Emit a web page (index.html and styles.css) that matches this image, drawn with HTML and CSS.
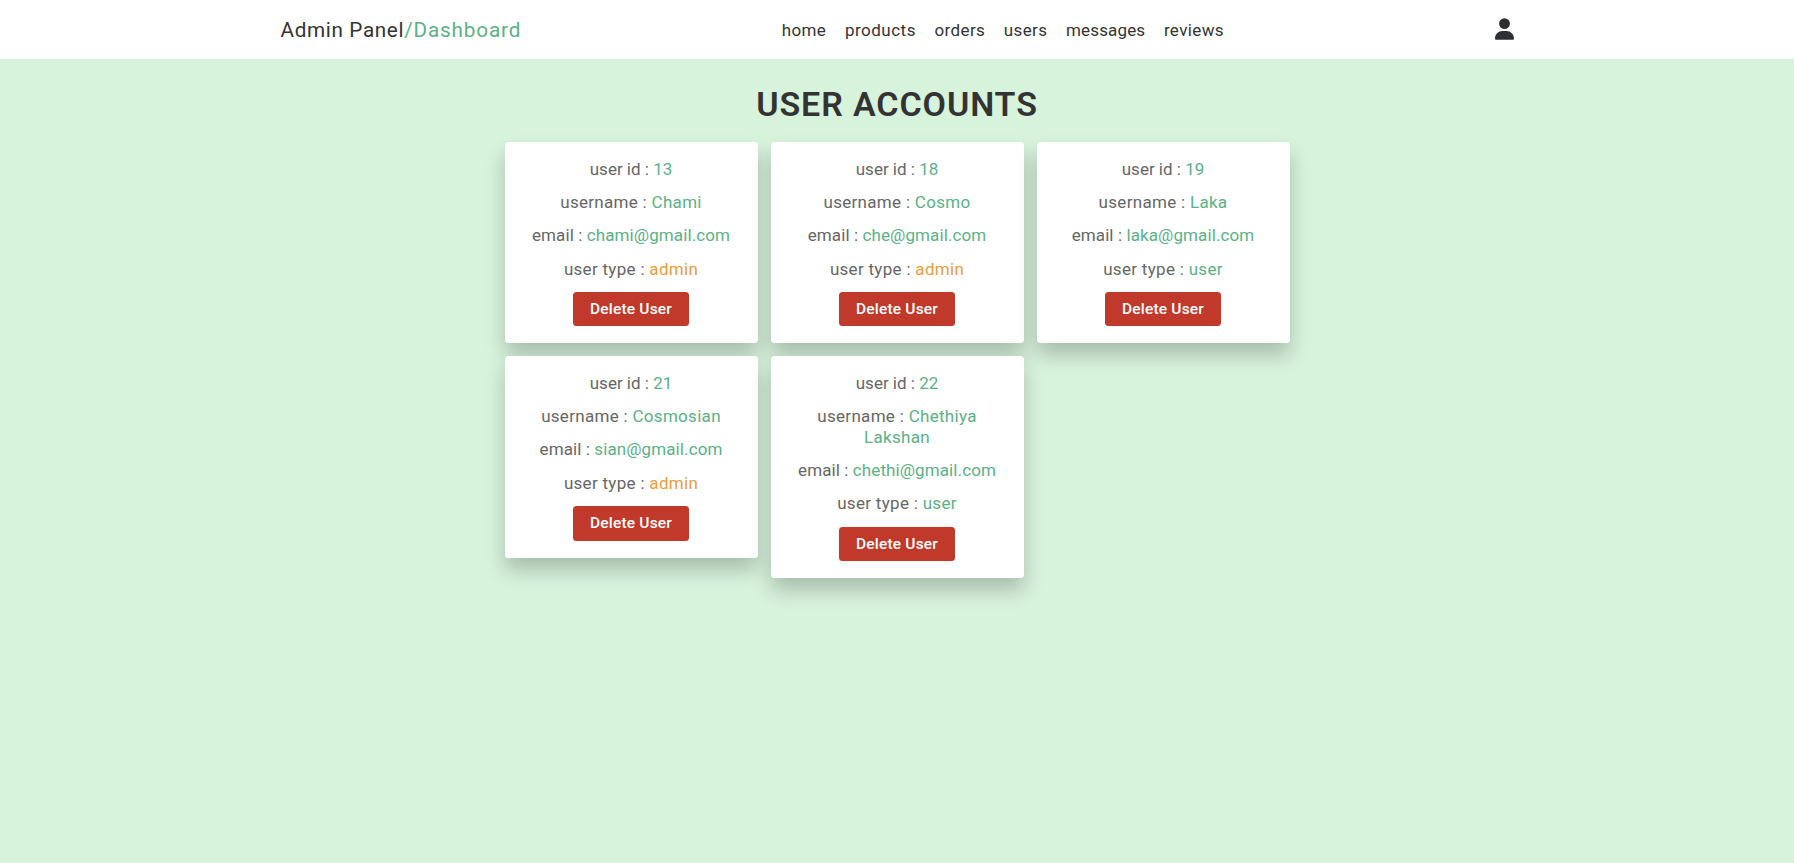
FILE: index.html
```
<!DOCTYPE html>
<html lang="en">
<head>
<meta charset="utf-8">
<title>User Accounts</title>
<link rel="stylesheet" href="styles.css">
</head>
<body>
<header class="header">
  <div class="bar">
    <a class="logo">Admin Panel<span>/Dashboard</span></a>
    <nav class="nav"><a>home</a><a class="wide">products</a><a>orders</a><a>users</a><a class="tight">messages</a><a>reviews</a></nav>
    <svg class="user-icon" viewBox="0 0 448 512"><path d="M224 256a128 128 0 1 0 0-256 128 128 0 1 0 0 256zm-45.700 48C79.800 304 0 383.800 0 482.300 0 498.700 13.300 512 29.700 512h388.600c16.400 0 29.700-13.300 29.700-29.700C448 383.800 368.200 304 269.700 304z"/></svg>
  </div>
</header>
<main class="accounts">
  <h1 class="heading">USER ACCOUNTS</h1>
  <div class="grid">
    <section class="card">
      <p class="id">user id : <span>13</span></p>
      <p class="name">username : <span>Chami</span></p>
      <p class="email">email : <span>chami@gmail.com</span></p>
      <p class="type">user type : <span class="admin">admin</span></p>
      <a class="delete">Delete User</a>
    </section>
    <section class="card">
      <p class="id">user id : <span>18</span></p>
      <p class="name">username : <span>Cosmo</span></p>
      <p class="email">email : <span>che@gmail.com</span></p>
      <p class="type">user type : <span class="admin">admin</span></p>
      <a class="delete">Delete User</a>
    </section>
    <section class="card">
      <p class="id">user id : <span>19</span></p>
      <p class="name">username : <span>Laka</span></p>
      <p class="email">email : <span>laka@gmail.com</span></p>
      <p class="type">user type : <span>user</span></p>
      <a class="delete">Delete User</a>
    </section>
    <section class="card">
      <p class="id">user id : <span>21</span></p>
      <p class="name">username : <span>Cosmosian</span></p>
      <p class="email">email : <span>sian@gmail.com</span></p>
      <p class="type">user type : <span class="admin">admin</span></p>
      <a class="delete">Delete User</a>
    </section>
    <section class="card">
      <p class="id">user id : <span>22</span></p>
      <p class="name">username : <span>Chethiya<br>Lakshan</span></p>
      <p class="email">email : <span>chethi@gmail.com</span></p>
      <p class="type">user type : <span>user</span></p>
      <a class="delete">Delete User</a>
    </section>
  </div>
</main>
</body>
</html>
```
FILE: styles.css
```
* { box-sizing: border-box; margin: 0; padding: 0; }
body {
  min-height: 863px;
  background: #d7f3dc;
  font-family: Roboto, "Liberation Sans", sans-serif;
  color: #333;
}
.header { height: 59px; background: #fff; }
.bar {
  display: flex;
  align-items: center;
  justify-content: space-between;
  width: 1233px;
  height: 59px;
  margin: 0 auto;
}
.logo { font-size: 20.7px; line-height: 24px; letter-spacing: 0.65px; }
.logo span { color: #5bb186; letter-spacing: 0.85px; }
.nav { display: flex; gap: 18.600px; margin-right: 11px; font-size: 17px; line-height: 20px; letter-spacing: 0.38px; }
.nav .wide { letter-spacing: 0.5px; }
.nav .tight { letter-spacing: 0.15px; }
.user-icon { width: 19px; height: 22px; fill: #2e3033; margin: 0 -1px 2px 0; }
.heading {
  padding: 25px 0 18px;
  font-size: 34px;
  line-height: 40px;
  font-weight: 600;
  letter-spacing: 0.9px;
  text-align: center;
}
.grid {
  display: grid;
  grid-template-columns: repeat(3, 253px);
  justify-content: center;
  align-items: start;
  gap: 13px;
  padding-left: 1px;
}
.card {
  display: flex;
  flex-direction: column;
  align-items: center;
  padding: 16.500px 26px 16.800px 25px;
  border-radius: 3.500px;
  background: #fff;
  box-shadow: 0 12px 20px rgba(0, 0, 0, 0.22);
  text-align: center;
}
.card p {
  padding-bottom: 12.800px;
  font-size: 17px;
  line-height: 20.550px;
  color: #666;
}
.card .id { letter-spacing: 0; }
.card .name { letter-spacing: 0.3px; }
.card .email { letter-spacing: 0.1px; }
.card .type { letter-spacing: 0.3px; }
.card p span { color: #5bb186; }
.card p .admin { color: #eb9c3c; }
.delete {
  width: 116px;
  height: 34.600px;
  border-radius: 3.500px;
  background: #c0392b;
  color: #fff;
  font-size: 15.500px;
  font-weight: 500;
  line-height: 34.600px;
  letter-spacing: 0.2px;
}
```
